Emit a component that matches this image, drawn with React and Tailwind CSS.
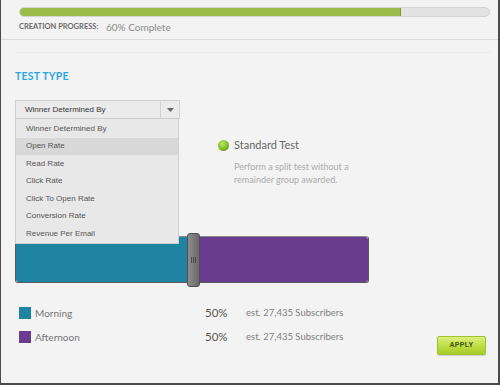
import React from "react";

const options = [
  "Winner Determined By",
  "Open Rate",
  "Read Rate",
  "Click Rate",
  "Click To Open Rate",
  "Conversion Rate",
  "Revenue Per Email",
];

const groups = [
  { name: "Morning", color: "bg-[#1e84a2]", pct: "50%", est: "est. 27,435 Subscribers" },
  { name: "Afternoon", color: "bg-[#6a3c8f]", pct: "50%", est: "est. 27,435 Subscribers" },
];

const App = () => {
  return (
    <div className="w-[500px] h-[385px] bg-[#f3f3f3] border-l border-r-2 border-b-2 border-[#4a4a4a] overflow-hidden font-['Lato',sans-serif]">
      {/* progress header */}
      <div className="h-[40px] border-b border-[#dcdcdc] pt-[7px]">
        <div className="ml-[18px] w-[471px] h-[10px] rounded-full bg-[#e2e2e2] border border-[#d4d4d4] overflow-hidden">
          <div className="w-[381px] h-full bg-[#9cbc4a] border-r border-[#7d9a35]" />
        </div>
        <div className="ml-[18px] mt-[4px] h-[12px] flex items-center">
          <span className="w-[87px] text-[7.5px] font-bold text-[#6a6a6a] uppercase whitespace-nowrap">
            Creation Progress:
          </span>
          <span className="text-[10px] text-[#8a8a8a]">60% Complete</span>
        </div>
      </div>
      <div className="ml-[16px] mt-[12px] w-[474px] h-px bg-[#ebebeb]" />

      <div className="ml-[14px] mt-[17px] h-[14px] flex items-center text-[10.5px] font-bold text-[#2aa7e0] tracking-[0.2px]">
        TEST TYPE
      </div>

      {/* select with open menu */}
      <div className="relative ml-[14px] mt-[16px] w-[165px] h-[19px] z-10">
        <div className="h-full flex bg-[#ebebeb] border border-[#cfcfcf] font-['Liberation_Sans',sans-serif] text-[8px] text-[#333]">
          <div className="flex-1 flex items-center pl-[9px]">Winner Determined By</div>
          <div className="w-[19px] border-l border-[#d4d4d4] flex items-center justify-center">
            <svg width="7" height="4" viewBox="0 0 7 4">
              <path d="M0 0h7L3.5 4z" fill="#666" />
            </svg>
          </div>
        </div>
        <div className="absolute left-0 top-[19px] w-[164px] h-[125px] bg-[#e8e8e8] border border-t-0 border-[#cfcfcf] pt-px font-['Liberation_Sans',sans-serif] text-[8px] text-[#555]">
          {options.map((o, i) => (
            <div
              key={o}
              className={`h-[17.5px] flex items-center pl-[10px] ${i === 1 ? "bg-[#d8d8d8]" : ""}`}
            >
              {o}
            </div>
          ))}
        </div>
      </div>

      {/* test option */}
      <div className="ml-[217px] mt-[19px]">
        <div className="h-[14px] flex items-center">
          <span className="w-[11px] h-[11px] rounded-full bg-[radial-gradient(circle_at_40%_35%,#c3e86a,#7bb321_60%,#5c8e14)]" />
          <span className="ml-[5px] text-[11px] text-[#666]">Standard Test</span>
        </div>
        <div className="ml-[16px] mt-[8px] w-[130px] text-[9px] leading-[13px] text-[#ababab]">
          Perform a split test without a remainder group awarded.
        </div>
      </div>

      {/* split slider */}
      <div className="relative ml-[14px] mt-[50px] w-[354px] h-[47px] flex rounded-[3px] border border-[#5a5a5a] border-t-[#8a8a8a] overflow-visible">
        <div className="w-[172px] bg-[#1e84a2] rounded-l-[3px]" />
        <div className="flex-1 bg-[#6a3c8f] rounded-r-[3px]" />
        <div className="absolute left-[171px] top-[-4px] w-[13px] h-[54px] rounded-[3px] border border-[#4f4f4f] bg-[linear-gradient(to_right,#8e8e8e,#7a7a7a_50%,#6a6a6a)] flex items-center justify-center gap-[1px]">
          <span className="w-px h-[6px] bg-[#4a4a4a]" />
          <span className="w-px h-[6px] bg-[#4a4a4a]" />
          <span className="w-px h-[6px] bg-[#4a4a4a]" />
        </div>
      </div>

      {/* legend */}
      <div className="flex items-start mt-[22px] pl-[18px] pr-[12px]">
        <div className="flex flex-col gap-[8px]">
          {groups.map((g) => (
            <div key={g.name} className="h-[16px] flex items-center">
              <span className={`w-[12px] h-[12px] ${g.color}`} />
              <span className="ml-[4px] w-[170px] text-[10px] text-[#777]">{g.name}</span>
              <span className="w-[41px] text-[11.5px] text-[#555]">{g.pct}</span>
              <span className="text-[9.5px] text-[#808080]">{g.est}</span>
            </div>
          ))}
        </div>
        <button className="ml-auto mt-[31px] w-[49px] h-[19px] rounded-[2px] border border-[#9fc12a] bg-[linear-gradient(to_bottom,#dcef7c,#b9da3c_60%,#a8cc2c)] text-[7px] font-bold text-[#3b5410] tracking-[0.3px] font-['Liberation_Sans',sans-serif] shadow-[0_1px_1px_rgba(0,0,0,0.15)]">
          APPLY
        </button>
      </div>
    </div>
  );
};

export default App;
